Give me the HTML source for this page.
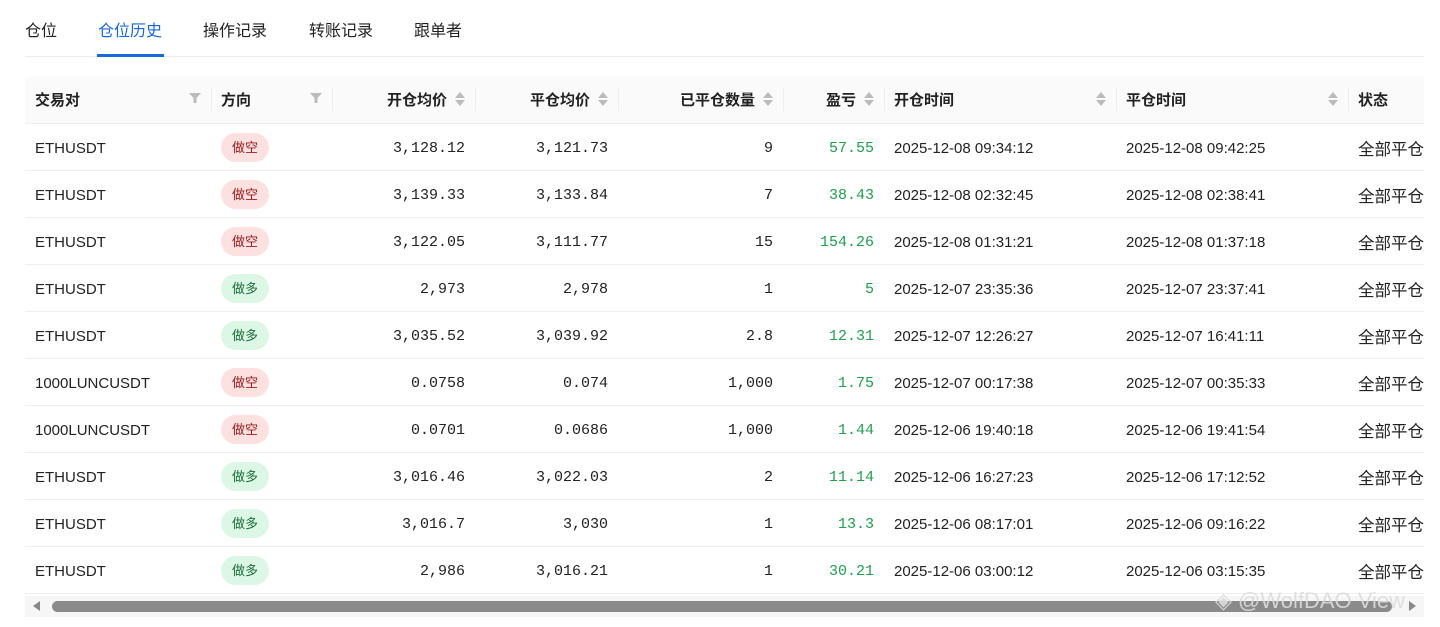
<!DOCTYPE html>
<html><head><meta charset="utf-8"><style>
*{margin:0;padding:0;box-sizing:border-box}
body{width:1440px;height:627px;background:#fff;font-family:"Liberation Sans","Noto Sans CJK SC",sans-serif;color:#222;overflow:hidden;position:relative}
.tabs{position:absolute;left:25px;top:0;width:1399px;height:57px;border-bottom:1px solid #ececec}
.tab{position:absolute;top:17px;font-size:16px;color:#222}
.tab.a{color:#1668dc}
.ul{position:absolute;left:97px;top:54px;width:67px;height:3px;background:#1668dc}
.wrap{position:absolute;left:25px;top:76px;width:1399px;height:520px;overflow:hidden}
table{border-collapse:collapse;table-layout:fixed;width:1449px}
th{height:47px;background:#fafafa;font-size:15px;font-weight:bold;text-align:left;padding:0 10px;position:relative;border-bottom:1px solid #eee}
th.r{text-align:right;padding-right:28px}
th:first-child{border-top-left-radius:8px}
th .sep{position:absolute;left:0;top:12px;height:23px;width:1px;background:#eee}
td{height:47px;border-bottom:1px solid #eee;font-size:15px;padding:3px 10px 0;white-space:nowrap;overflow:hidden}
td:last-child{font-size:16.5px}
td.n{text-align:right;font-family:"Liberation Mono",monospace;font-size:15px}
td.g{color:#1fa04f}
.s{position:absolute;right:10px;top:15px;width:10px;height:16px}
.f{position:absolute;right:10px;top:16px;width:12px;height:12px}
.tag{display:inline-block;width:48px;height:29px;line-height:29px;border-radius:15px;text-align:center;font-size:13px;margin-top:-2px}
.k{background:#fde0e0;color:#9a1c1c}
.d{background:#dcf7e6;color:#1c6e3a}
.sb{position:absolute;left:25px;top:596px;width:1399px;height:21px;background:#f6f6f6}
.th{position:absolute;left:52px;top:601px;width:1340px;height:11px;background:#8a8a8a;border-radius:6px}
.wm{position:absolute;left:1215px;top:588px;font-size:22px;color:rgba(220,220,220,.9)}
</style></head><body>
<div class="tabs">
<span class="tab" style="left:0">仓位</span>
<span class="tab a" style="left:73px">仓位历史</span>
<span class="tab" style="left:178px">操作记录</span>
<span class="tab" style="left:284px">转账记录</span>
<span class="tab" style="left:389px">跟单者</span>
</div>
<div class="ul"></div>
<div class="wrap"><table>
<colgroup><col style="width:186px"><col style="width:121px"><col style="width:143px"><col style="width:143px"><col style="width:165px"><col style="width:101px"><col style="width:232px"><col style="width:232px"><col style="width:126px"></colgroup>
<tr><th>交易对<svg class="f" viewBox="0 0 12 12"><path d="M0 1H12L7.5 6V11H4.5V6z" fill="#bbb"/></svg></th><th><span class="sep"></span>方向<svg class="f" viewBox="0 0 12 12"><path d="M0 1H12L7.5 6V11H4.5V6z" fill="#bbb"/></svg></th>
<th class="r"><span class="sep"></span>开仓均价<svg class="s" viewBox="0 0 10 16"><path d="M5 1L10 7H0z M5 15L10 9H0z" fill="#bbb"/></svg></th>
<th class="r"><span class="sep"></span>平仓均价<svg class="s" viewBox="0 0 10 16"><path d="M5 1L10 7H0z M5 15L10 9H0z" fill="#bbb"/></svg></th>
<th class="r"><span class="sep"></span>已平仓数量<svg class="s" viewBox="0 0 10 16"><path d="M5 1L10 7H0z M5 15L10 9H0z" fill="#bbb"/></svg></th>
<th class="r"><span class="sep"></span>盈亏<svg class="s" viewBox="0 0 10 16"><path d="M5 1L10 7H0z M5 15L10 9H0z" fill="#bbb"/></svg></th>
<th><span class="sep"></span>开仓时间<svg class="s" viewBox="0 0 10 16"><path d="M5 1L10 7H0z M5 15L10 9H0z" fill="#bbb"/></svg></th>
<th><span class="sep"></span>平仓时间<svg class="s" viewBox="0 0 10 16"><path d="M5 1L10 7H0z M5 15L10 9H0z" fill="#bbb"/></svg></th>
<th><span class="sep"></span>状态</th></tr>
<tr><td>ETHUSDT</td><td><span class="tag k">做空</span></td><td class="n">3,128.12</td><td class="n">3,121.73</td><td class="n">9</td><td class="n g">57.55</td><td>2025-12-08 09:34:12</td><td>2025-12-08 09:42:25</td><td>全部平仓</td></tr>
<tr><td>ETHUSDT</td><td><span class="tag k">做空</span></td><td class="n">3,139.33</td><td class="n">3,133.84</td><td class="n">7</td><td class="n g">38.43</td><td>2025-12-08 02:32:45</td><td>2025-12-08 02:38:41</td><td>全部平仓</td></tr>
<tr><td>ETHUSDT</td><td><span class="tag k">做空</span></td><td class="n">3,122.05</td><td class="n">3,111.77</td><td class="n">15</td><td class="n g">154.26</td><td>2025-12-08 01:31:21</td><td>2025-12-08 01:37:18</td><td>全部平仓</td></tr>
<tr><td>ETHUSDT</td><td><span class="tag d">做多</span></td><td class="n">2,973</td><td class="n">2,978</td><td class="n">1</td><td class="n g">5</td><td>2025-12-07 23:35:36</td><td>2025-12-07 23:37:41</td><td>全部平仓</td></tr>
<tr><td>ETHUSDT</td><td><span class="tag d">做多</span></td><td class="n">3,035.52</td><td class="n">3,039.92</td><td class="n">2.8</td><td class="n g">12.31</td><td>2025-12-07 12:26:27</td><td>2025-12-07 16:41:11</td><td>全部平仓</td></tr>
<tr><td>1000LUNCUSDT</td><td><span class="tag k">做空</span></td><td class="n">0.0758</td><td class="n">0.074</td><td class="n">1,000</td><td class="n g">1.75</td><td>2025-12-07 00:17:38</td><td>2025-12-07 00:35:33</td><td>全部平仓</td></tr>
<tr><td>1000LUNCUSDT</td><td><span class="tag k">做空</span></td><td class="n">0.0701</td><td class="n">0.0686</td><td class="n">1,000</td><td class="n g">1.44</td><td>2025-12-06 19:40:18</td><td>2025-12-06 19:41:54</td><td>全部平仓</td></tr>
<tr><td>ETHUSDT</td><td><span class="tag d">做多</span></td><td class="n">3,016.46</td><td class="n">3,022.03</td><td class="n">2</td><td class="n g">11.14</td><td>2025-12-06 16:27:23</td><td>2025-12-06 17:12:52</td><td>全部平仓</td></tr>
<tr><td>ETHUSDT</td><td><span class="tag d">做多</span></td><td class="n">3,016.7</td><td class="n">3,030</td><td class="n">1</td><td class="n g">13.3</td><td>2025-12-06 08:17:01</td><td>2025-12-06 09:16:22</td><td>全部平仓</td></tr>
<tr><td>ETHUSDT</td><td><span class="tag d">做多</span></td><td class="n">2,986</td><td class="n">3,016.21</td><td class="n">1</td><td class="n g">30.21</td><td>2025-12-06 03:00:12</td><td>2025-12-06 03:15:35</td><td>全部平仓</td></tr>
</table></div>
<div class="sb"></div>
<div class="th"></div>
<svg style="position:absolute;left:33px;top:601px" width="8" height="10"><path d="M7 0L0 5L7 10z" fill="#888"/></svg>
<svg style="position:absolute;left:1408px;top:601px" width="8" height="10"><path d="M1 0L8 5L1 10z" fill="#888"/></svg>
<div class="wm">◈ @WolfDAO View</div>
</body></html>
